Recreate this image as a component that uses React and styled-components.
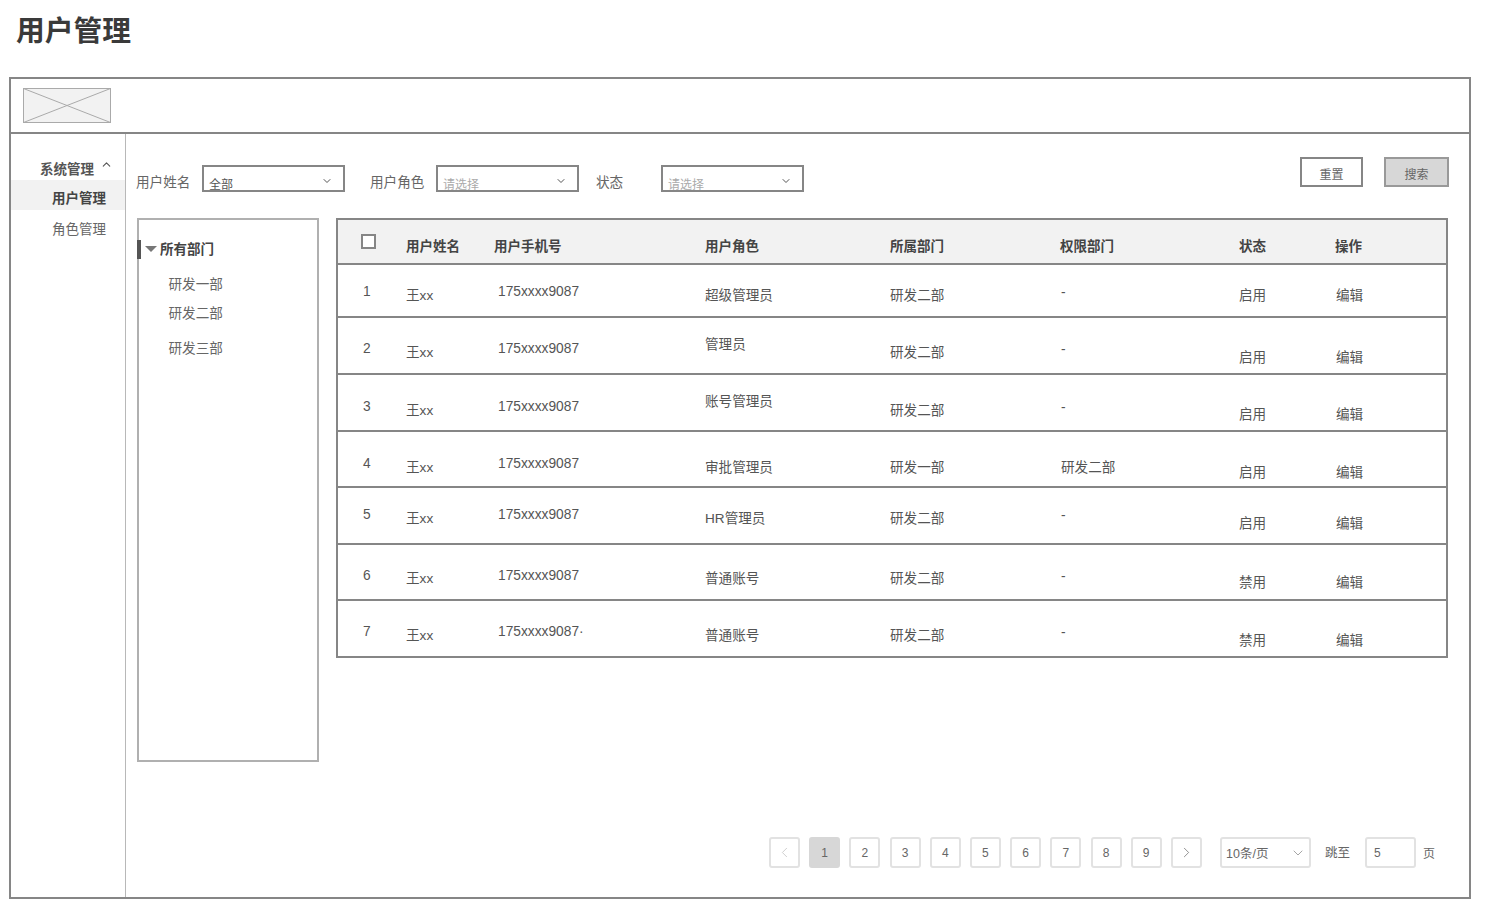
import React from 'react';
import styled, { createGlobalStyle } from 'styled-components';
import { ChevronDown, ChevronLeft, ChevronRight, ChevronUp } from 'lucide-react';

const Global = createGlobalStyle`
  html, body { margin: 0; padding: 0; background: #fff; }
  body { font-family: "Liberation Sans", "Noto Sans CJK SC", sans-serif; color: #555; font-size: 13.6px; }
  * { box-sizing: border-box; }
`;

const Page = styled.div`
  width: 1487px;
  height: 914px;
  padding: 0 0 0 9px;
  overflow: hidden;
`;
const Title = styled.h1`
  margin: 0 0 0 7px;
  height: 77px;
  padding-top: 12px;
  font-size: 28.75px;
  line-height: 38px;
  font-weight: 700;
  color: #3a3a3a;
`;
const Frame = styled.div`
  width: 1462px;
  height: 822px;
  border: 2px solid #868686;
  display: flex;
  flex-direction: column;
`;
const TopBar = styled.header`
  height: 55px;
  flex: none;
  border-bottom: 2px solid #868686;
  padding: 9px 0 0 12px;
`;
const LogoBox = styled.svg`
  display: block;
  width: 88px;
  height: 35px;
`;
const Body = styled.div`
  flex: 1;
  display: flex;
  min-height: 0;
`;
const Side = styled.nav`
  width: 115px;
  flex: none;
  border-right: 1px solid #b8b8b8;
  padding-top: 26px;
`;
const SideHead = styled.div`
  height: 20px;
  padding-left: 29px;
  line-height: 20px;
  font-weight: 700;
  font-size: 13.5px;
  color: #555;
  display: flex;
  align-items: flex-start;
  svg { margin: -2px 0 0 6px; }
`;
const SideItem = styled.div`
  height: 30px;
  padding-left: 41px;
  font-size: 13.5px;
  font-weight: ${p => (p.$active ? 700 : 400)};
  background: ${p => (p.$active ? '#f2f2f2' : 'transparent')};
  color: ${p => (p.$active ? '#444' : '#666')};
  line-height: ${p => (p.$active ? '37px' : '39px')};
`;
const Content = styled.main`
  flex: 1;
  min-width: 0;
  padding: 23px 20px 0 11px;
  display: flex;
  flex-direction: column;
`;
const Toolbar = styled.div`
  height: 61px;
  flex: none;
  display: flex;
  align-items: flex-start;
  margin-left: -1px;
`;
const Label = styled.span`
  width: ${p => p.$w}px;
  flex: none;
  margin-top: 16px;
  line-height: 20px;
  color: #666;
`;
const SelectBox = styled.div`
  position: relative;
  flex: none;
  width: 143px;
  height: 27px;
  margin: 8px ${p => p.$after}px 0 0;
  border: 2px solid #868686;
  padding: 9px 0 0 5px;
  font-size: 12px;
  line-height: 19px;
  overflow: hidden;
  color: ${p => (p.$placeholder ? '#aaa' : '#555')};
  svg { position: absolute; right: 10px; top: 8px; color: #555; }
`;
const Actions = styled.div`
  margin-left: auto;
  display: flex;
  gap: 21px;
`;
const Btn = styled.button`
  width: ${p => p.$w}px;
  height: 30px;
  padding: 3px 0 0;
  border: 2px solid #868686;
  background: ${p => (p.$primary ? '#d7d7d7' : '#fff')};
  border-color: ${p => (p.$primary ? '#999' : '#868686')};
  font: inherit;
  font-size: 12px;
  color: #666;
`;
const Split = styled.div`
  display: flex;
  align-items: flex-start;
  gap: 17px;
`;
const Tree = styled.aside`
  position: relative;
  width: 182px;
  height: 544px;
  flex: none;
  border: 2px solid #b0b0b0;
  color: #666;
`;
const TreeMark = styled.i`
  position: absolute;
  left: -2px;
  top: 20px;
  width: 4px;
  height: 19px;
  background: #555;
`;
const TreeRoot = styled.div`
  display: flex;
  align-items: center;
  height: 20px;
  margin: 18px 0 0 6px;
  font-weight: 700;
  font-size: 13.5px;
  color: #444;
`;
const Tri = styled.span`
  width: 0;
  height: 0;
  margin: 1px 3px 0 0;
  border-left: 6px solid transparent;
  border-right: 6px solid transparent;
  border-top: 6px solid #777;
`;
const TreeItem = styled.div`
  margin: ${p => p.$gap}px 0 0 29.5px;
  line-height: 20px;
`;
const Table = styled.div`
  width: 1112px;
  border: 2px solid #868686;
  border-bottom: 0;
`;
const cols = '68px 92px 207px 185px 171px 178px 97px 1fr';
const HeadRow = styled.div`
  display: grid;
  grid-template-columns: ${cols};
  height: 45px;
  background: #f2f2f2;
  border-bottom: 2px solid #868686;
  font-weight: 700;
  font-size: 13.5px;
  color: #444;
`;
const HeadCell = styled.div`
  padding-top: 17px;
  margin-left: ${p => p.$dx || 0}px;
  line-height: 20px;
`;
const Check = styled.span`
  display: block;
  width: 15px;
  height: 15px;
  margin: 14px 0 0 23px;
  border: 2px solid #868686;
  background: #fff;
`;
const Row = styled.div`
  display: grid;
  grid-template-columns: ${cols};
  height: ${p => p.$h}px;
  border-bottom: 2px solid #868686;
`;
const Cell = styled.div`
  padding-top: ${p => p.$y}px;
  padding-left: ${p => p.$pl || 0}px;
  line-height: 20px;
  white-space: nowrap;
  font-size: ${p => (p.$num ? '13.75px' : 'inherit')};
`;
const Pager = styled.div`
  display: flex;
  align-items: center;
  margin: 75px 0 0 632px;
  font-size: 12px;
`;
const PageBtn = styled.span`
  width: 31px;
  height: 31px;
  margin-right: 9.2px;
  display: flex;
  align-items: center;
  justify-content: center;
  border: 2px solid ${p => (p.$active ? '#d7d7d7' : '#e2e2e2')};
  border-radius: 3px;
  background: ${p => (p.$active ? '#d7d7d7' : '#fff')};
  color: #666;
  svg { color: ${p => (p.$muted ? '#bbb' : '#666')}; }
`;
const PageSize = styled.span`
  width: 91px;
  height: 31px;
  margin-left: 9px;
  padding-left: 4px;
  display: flex;
  align-items: center;
  justify-content: space-between;
  border: 2px solid #e2e2e2;
  border-radius: 3px;
  font-size: 12.5px;
  color: #666;
  svg { margin-right: 3px; color: #777; }
`;
const JumpLabel = styled.span`
  margin: -3px 15px 0 14px;
  font-size: 12.5px;
  color: #666;
`;
const JumpBox = styled.span`
  width: 51px;
  height: 31px;
  padding-left: 7px;
  display: flex;
  align-items: center;
  border: 2px solid #e2e2e2;
  border-radius: 3px;
  color: #666;
`;
const Suffix = styled.span`
  margin-left: 7px;
  color: #666;
`;

const rows = [
  { h: 53, top: 264, c: ['1', '王xx', '175xxxx9087', '超级管理员', '研发二部', '-', '启用', '编辑'], y: [291, 295, 291, 295, 295, 292, 295, 295] },
  { h: 57, top: 317, c: ['2', '王xx', '175xxxx9087', '管理员', '研发二部', '-', '启用', '编辑'], y: [348, 352, 348, 344, 352, 349, 357, 357] },
  { h: 57, top: 374, c: ['3', '王xx', '175xxxx9087', '账号管理员', '研发二部', '-', '启用', '编辑'], y: [406, 410, 406, 401, 410, 407, 414, 414] },
  { h: 56, top: 431, c: ['4', '王xx', '175xxxx9087', '审批管理员', '研发一部', '研发二部', '启用', '编辑'], y: [463, 467, 463, 467, 467, 467, 472, 472] },
  { h: 57, top: 487, c: ['5', '王xx', '175xxxx9087', 'HR管理员', '研发二部', '-', '启用', '编辑'], y: [514, 518, 514, 518, 518, 515, 523, 523] },
  { h: 56, top: 544, c: ['6', '王xx', '175xxxx9087', '普通账号', '研发二部', '-', '禁用', '编辑'], y: [575, 578, 575, 578, 578, 576, 582, 582] },
  { h: 57, top: 600, c: ['7', '王xx', '175xxxx9087·', '普通账号', '研发二部', '-', '禁用', '编辑'], y: [631, 635, 631, 635, 635, 632, 640, 640] },
];
const heads = [
  ['用户姓名', 0], ['用户手机号', -4], ['用户角色', 0], ['所属部门', 0], ['权限部门', -1], ['状态', 0], ['操作', -1],
];

const Select = ({ text, placeholder, after }) => (
  <SelectBox $placeholder={placeholder} $after={after}>
    {text}
    <ChevronDown size={12} strokeWidth={2} />
  </SelectBox>
);

export default function App() {
  return (
    <Page>
      <Global />
      <Title>用户管理</Title>
      <Frame>
        <TopBar>
          <LogoBox viewBox="0 0 88 35">
            <rect x="0.5" y="0.5" width="87" height="34" fill="#f2f2f2" stroke="#aaa" />
            <path d="M0.5 0.5L87.5 34.5M87.5 0.5L0.5 34.5" stroke="#aaa" fill="none" />
          </LogoBox>
        </TopBar>
        <Body>
          <Side>
            <SideHead>系统管理<ChevronUp size={13} strokeWidth={2} /></SideHead>
            <SideItem $active>用户管理</SideItem>
            <SideItem>角色管理</SideItem>
          </Side>
          <Content>
            <Toolbar>
              <Label $w={66}>用户姓名</Label>
              <Select text="全部" after={25} />
              <Label $w={66}>用户角色</Label>
              <Select text="请选择" placeholder after={17} />
              <Label $w={65}>状态</Label>
              <Select text="请选择" placeholder after={0} />
              <Actions>
                <Btn $w={63}>重置</Btn>
                <Btn $w={65} $primary>搜索</Btn>
              </Actions>
            </Toolbar>
            <Split>
              <Tree>
                <TreeMark />
                <TreeRoot><Tri />所有部门</TreeRoot>
                <TreeItem $gap={17}>研发一部</TreeItem>
                <TreeItem $gap={9}>研发二部</TreeItem>
                <TreeItem $gap={15}>研发三部</TreeItem>
              </Tree>
              <Table>
                <HeadRow>
                  <div><Check /></div>
                  {heads.map(([h, dx]) => <HeadCell key={h} $dx={dx}>{h}</HeadCell>)}
                </HeadRow>
                {rows.map(r => (
                  <Row key={r.c[0]} $h={r.h}>
                    {r.c.map((t, i) => (
                      <Cell key={i} $y={r.y[i] - r.top - 10} $pl={i === 0 ? 25 : 0} $num={i === 0 || i === 2 || t === '-'}>{t}</Cell>
                    ))}
                  </Row>
                ))}
              </Table>
            </Split>
            <Pager>
              <PageBtn $muted><ChevronLeft size={17} strokeWidth={1} /></PageBtn>
              {[1, 2, 3, 4, 5, 6, 7, 8, 9].map(n => <PageBtn key={n} $active={n === 1}>{n}</PageBtn>)}
              <PageBtn><ChevronRight size={17} strokeWidth={1} /></PageBtn>
              <PageSize>10条/页<ChevronDown size={16} strokeWidth={1} /></PageSize>
              <JumpLabel>跳至</JumpLabel>
              <JumpBox>5</JumpBox>
              <Suffix>页</Suffix>
            </Pager>
          </Content>
        </Body>
      </Frame>
    </Page>
  );
}
